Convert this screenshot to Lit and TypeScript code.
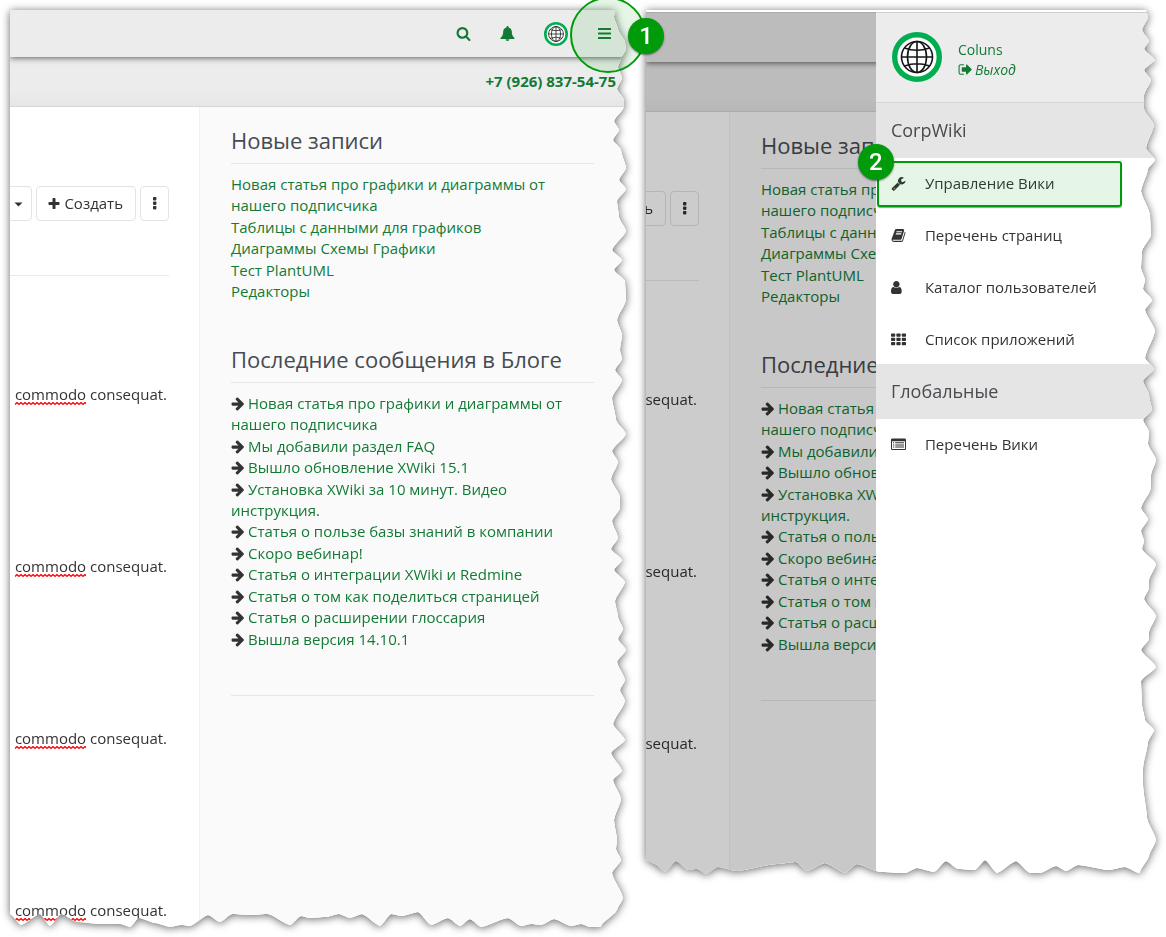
import { LitElement, html, svg, css, type TemplateResult, type SVGTemplateResult } from "lit";
import { customElement, property } from "lit/decorators.js";
import { styleMap } from "lit/directives/style-map.js";

type Point = [number, number];

interface TornFrame {
  x: number;
  y: number;
  width: number;
  height: number;
  right: Point[];
  bottom: Point[];
}

/** Eased samples between neighbouring peaks, so that the paper edge has soft teeth. */
function smooth(points: Point[], along: 0 | 1): Point[] {
  const across = along === 0 ? 1 : 0;
  const out: Point[] = [];
  const steps = 6;
  for (let i = 0; i < points.length - 1; i++) {
    const from = points[i];
    const to = points[i + 1];
    for (let s = 0; s < steps; s++) {
      const t = s / steps;
      const eased = (t + (1 - Math.cos(Math.PI * t)) / 2) / 2;
      const p: Point = [0, 0];
      p[along] = from[along] + (to[along] - from[along]) * t;
      p[across] = from[across] + (to[across] - from[across]) * eased;
      out.push(p);
    }
  }
  out.push(points[points.length - 1]);
  return out;
}

/** Clip polygon: the teeth keep their depth while the edge stretches with the box. */
function tornEdge(f: TornFrame): string {
  const right = smooth(f.right, 1).map(
    ([x, y]) =>
      `calc(100% - ${(f.x + f.width - x).toFixed(2)}px) ${(((y - f.y) / f.height) * 100).toFixed(3)}%`
  );
  const bottom = smooth(f.bottom, 0)
    .reverse()
    .map(
      ([x, y]) =>
        `${(((x - f.x) / f.width) * 100).toFixed(3)}% calc(100% - ${(f.y + f.height - y).toFixed(2)}px)`
    );
  return `polygon(0 0, ${right.join(", ")}, ${bottom.join(", ")})`;
}

const LEFT_EDGE = tornEdge({
  x: 10, y: 10, width: 617, height: 917,
  right: [
    [615, 10], [614, 17], [618, 29], [625, 42], [626, 49], [621, 59], [618, 67], [622, 78], [617, 89],
    [624, 100], [624, 107], [614, 121], [619, 130], [613, 140], [621, 150], [626, 168], [619, 180],
    [626, 189], [617, 201], [619, 217], [626, 231], [612, 250], [622, 260], [614, 270], [625, 281],
    [626, 300], [617, 320], [622, 335], [620, 350], [622, 359], [615, 370], [622, 380], [612, 398],
    [616, 420], [626, 434], [612, 451], [618, 462], [611, 479], [620, 497], [620, 508], [612, 521],
    [618, 538], [611, 549], [622, 560], [614, 570], [625, 582], [615, 601], [618, 617], [623, 629],
    [618, 639], [626, 650], [617, 662], [625, 680], [620, 690], [625, 701], [613, 724], [625, 740],
    [611, 753], [622, 771], [613, 780], [621, 799], [614, 820], [617, 840], [616, 849], [621, 860],
    [612, 873], [623, 898], [617, 910], [601, 926],
  ],
  bottom: [
    [10, 914], [21, 925], [40, 914], [50, 926], [61, 914], [77, 922], [100, 924], [120, 924],
    [130, 927], [139, 918], [155, 923], [170, 927], [181, 925], [190, 926], [208, 915], [220, 922],
    [232, 914], [250, 915], [268, 914], [290, 925], [301, 916], [310, 918], [326, 917], [339, 914],
    [350, 918], [362, 914], [380, 926], [391, 914], [402, 916], [418, 912], [431, 925], [448, 918],
    [460, 926], [470, 919], [481, 927], [508, 918], [521, 926], [531, 924], [541, 925], [554, 919],
    [571, 926], [581, 924], [590, 927], [601, 927],
  ],
});

const RIGHT_EDGE = tornEdge({
  x: 646, y: 10, width: 511, height: 864,
  right: [
    [1146, 10], [1148, 17], [1142, 30], [1149, 41], [1144, 49], [1155, 60], [1144, 70], [1151, 80],
    [1144, 95], [1144, 109], [1154, 125], [1146, 148], [1155, 160], [1148, 169], [1141, 191],
    [1150, 215], [1151, 235], [1142, 251], [1141, 268], [1145, 280], [1143, 289], [1152, 300],
    [1145, 310], [1155, 331], [1145, 358], [1154, 369], [1143, 381], [1149, 395], [1152, 410],
    [1143, 420], [1149, 432], [1148, 444], [1156, 460], [1151, 475], [1151, 488], [1141, 508],
    [1148, 519], [1141, 531], [1144, 541], [1142, 549], [1156, 564], [1149, 580], [1149, 588],
    [1144, 599], [1156, 616], [1149, 632], [1149, 639], [1141, 650], [1156, 667], [1141, 681],
    [1142, 705], [1145, 720], [1154, 730], [1148, 742], [1143, 768], [1143, 785], [1147, 818],
    [1156, 840], [1149, 856], [1140, 872],
  ],
  bottom: [
    [646, 860], [655, 864], [665, 872], [676, 861], [688, 870], [697, 869], [706, 874], [718, 867],
    [736, 871], [777, 864], [796, 862], [807, 871], [825, 863], [845, 873], [857, 864], [880, 872],
    [905, 873], [917, 868], [934, 872], [946, 861], [958, 869], [975, 870], [985, 860], [997, 873],
    [1016, 861], [1030, 873], [1040, 873], [1056, 866], [1066, 871], [1078, 865], [1109, 870],
    [1125, 867], [1139, 873],
  ],
});

const grid3 = [0, 1, 2];

const ICONS: Record<string, { box: string; shape: SVGTemplateResult }> = {
  search: {
    box: "0 0 1792 1792",
    shape: svg`<path d="M1216 832q0-185-131.5-316.5t-316.5-131.5-316.5 131.5-131.5 316.5 131.5 316.5 316.5 131.5 316.5-131.5 131.5-316.5zm512 832q0 52-38 90t-90 38q-54 0-90-38l-343-342q-179 124-399 124-143 0-273.5-55.5t-225-150-150-225-55.5-273.5 55.5-273.5 150-225 225-150 273.5-55.5 273.5 55.5 225 150 150 225 55.5 273.5q0 220-124 399l343 343q37 37 37 90z"/>`,
  },
  bell: {
    box: "0 0 15 15",
    shape: svg`<path d="M7.500 0c.6 0 1 .4 1 1v.4c2.100.4 3.300 2.100 3.300 4.200 0 3.500 1 5 2.700 6.300.2.500-.1 1.100-.7 1.100H1.200c-.6 0-.9-.6-.7-1.100C2.200 10.600 3.200 9.100 3.200 5.600c0-2.100 1.200-3.800 3.300-4.200V1c0-.6.4-1 1-1zM5.700 13.300h3.600c0 1-.8 1.700-1.800 1.700s-1.800-.7-1.800-1.700z"/>`,
  },
  bars: {
    box: "0 0 15 15",
    shape: svg`<rect x="1" y="2" width="13" height="2" rx=".5"/><rect x="1" y="6.500" width="13" height="2" rx=".5"/><rect x="1" y="11" width="13" height="2" rx=".5"/>`,
  },
  signout: {
    box: "0 0 1792 1792",
    shape: svg`<path d="M704 1440q0 4 1 20t.5 26.500-3 23.500-10 19.500-20.500 6.500h-320q-119 0-203.500-84.500t-84.500-203.500v-704q0-119 84.500-203.500t203.500-84.500h320q13 0 22.500 9.500t9.500 22.500q0 4 1 20t.5 26.500-3 23.500-10 19.500-20.500 6.500h-320q-66 0-113 47t-47 113v704q0 66 47 113t113 47h312l11.500 1 11.500 3 8 5.500 7 9 2 13.500zm928-544q0 26-19 45l-544 544q-19 19-45 19t-45-19-19-45v-288h-448q-26 0-45-19t-19-45v-384q0-26 19-45t45-19h448v-288q0-26 19-45t45-19 45 19l544 544q19 19 19 45z"/>`,
  },
  wrench: {
    box: "0 0 1792 1792",
    shape: svg`<path d="M448 1472q0-26-19-45t-45-19-45 19-19 45 19 45 45 19 45-19 19-45zm644-420l-682 682q-37 37-90 37-52 0-91-37l-106-108q-38-36-38-90 0-53 38-91l681-681q39 98 114.500 173.500t173.500 114.500zm634-435q0 39-23 106-47 134-164.500 217.500t-258.500 83.500q-185 0-316.500-131.500t-131.500-316.500 131.500-316.500 316.500-131.500q58 0 121.500 16.500t107.500 46.500q16 11 16 28t-16 28l-293 169v224l193 107q5-3 79-48.500t135.500-81 70.500-35.500q15 0 23.500 10t8.500 25z"/>`,
  },
  book: {
    box: "0 0 1792 1792",
    shape: svg`<path d="M1703 478q40 57 18 129l-275 906q-19 64-76.500 107.500t-122.500 43.500h-923q-77 0-148.500-53.500t-99.500-131.500q-24-67-2-127 0-4 3-27t4-37q1-8-3-21.500t-3-19.500q2-11 8-21t16.500-23.500 16.500-23.500q23-38 45-91.500t30-91.500q3-10 .5-30t-.5-28q3-11 17-28t17-23q21-36 42-92t25-90q1-9-2.500-32t.5-28q4-13 22-30.500t22-22.500q19-26 42.500-84.500t27.500-96.500q1-8-3-25.500t-2-26.500q2-8 9-18t18-23 17-21q8-12 16.500-30.500t15-35 16-36 19.500-32 26.500-23.500 36-11.500 47.500 5.500l-1 3q38-9 51-9h761q74 0 114 56t18 130l-274 906q-36 119-71.500 153.500t-128.500 34.500h-869q-27 0-38 15-11 16-1 43 24 70 144 70h923q29 0 56-15.500t35-41.500l300-987q7-22 5-57 38 15 59 43zm-1064 2q-4 13 2 22.500t20 9.500h608q13 0 25.500-9.500t16.500-22.500l21-64q4-13-2-22.500t-20-9.500h-608q-13 0-25.500 9.500t-16.500 22.500zm-83 256q-4 13 2 22.500t20 9.500h608q13 0 25.500-9.500t16.500-22.500l21-64q4-13-2-22.500t-20-9.500h-608q-13 0-25.500 9.500t-16.500 22.500z"/>`,
  },
  user: {
    box: "256 0 1792 1792",
    shape: svg`<path d="M1536 1399q0 109-62.500 187t-150.500 78h-854q-88 0-150.500-78t-62.500-187q0-85 8.500-160.500t31.500-152 58.500-131 94-89 134.500-34.500q131 128 313 128t313-128q76 0 134.500 34.500t94 89 58.500 131 31.500 152 8.500 160.500zm-256-887q0 159-112.500 271.500t-271.500 112.500-271.500-112.500-112.500-271.500 112.500-271.500 271.500-112.500 271.500 112.500 112.500 271.500z"/>`,
  },
  apps: {
    box: "0 0 15 15",
    shape: svg`${grid3.map((r) =>
      grid3.map((c) => svg`<rect x=${c * 5.4} y=${1.6 + r * 4.2} width="4.200" height="3.200" rx=".7"/>`)
    )}`,
  },
  list: {
    box: "0 0 15 15",
    shape: svg`<path fill-rule="evenodd" d="M1.300 1.500h12.400c.7 0 1.300.6 1.300 1.300v8.900c0 .7-.6 1.300-1.300 1.300H1.300C.6 13 0 12.400 0 11.700V2.800c0-.7.6-1.300 1.300-1.300zM1 4.200v7.500c0 .2.100.3.300.3h12.400c.2 0 .3-.1.300-.3V4.200zM2 5.300h1.200v1H2zm2.200 0H13v1H4.200zM2 7.400h1.200v1H2zm2.200 0H13v1H4.200zM2 9.500h1.200v1H2zm2.200 0H13v1H4.200z"/>`,
  },
  plus: {
    box: "128 128 1536 1536",
    shape: svg`<path d="M1600 736v192q0 40-28 68t-68 28h-416v416q0 40-28 68t-68 28h-192q-40 0-68-28t-28-68v-416h-416q-40 0-68-28t-28-68v-192q0-40 28-68t68-28h416v-416q0-40 28-68t68-28h192q40 0 68 28t28 68v416h416q40 0 68 28t28 68z"/>`,
  },
  dots: {
    box: "0 0 15 15",
    shape: svg`<rect x="6" y="1" width="3.400" height="3.400" rx=".8"/><rect x="6" y="5.500" width="3.400" height="3.400" rx=".8"/><rect x="6" y="10" width="3.400" height="3.400" rx=".8"/>`,
  },
  caret: {
    box: "0 0 15 15",
    shape: svg`<path d="M4.500 6.500h8l-4 4z"/>`,
  },
  arrow: {
    box: "128 0 1664 1792",
    shape: svg`<path d="M1664 960q0 54-37 91l-651 651q-39 37-91 37-51 0-90-37l-75-75q-38-38-38-91t38-91l293-293h-704q-52 0-84.500-37.500t-32.500-90.500v-128q0-53 32.500-90.500t84.500-37.500h704l-293-294q-38-36-38-90t38-90l75-75q38-38 90-38 53 0 91 38l651 651q37 35 37 90z"/>`,
  },
};

function icon(name: string): TemplateResult {
  const { box, shape } = ICONS[name];
  return html`<svg class="icon icon-${name}" viewBox=${box} aria-hidden="true">${shape}</svg>`;
}

function globe(): TemplateResult {
  return html`<svg class="globe" viewBox="0 0 50 50" aria-hidden="true">
    <circle cx="25" cy="25" r="22.300" fill="#fff" stroke="#00ad50" stroke-width="5.400" />
    <g fill="none" stroke="#151515" stroke-width="1.600">
      <circle cx="25" cy="25" r="15.500" />
      <ellipse cx="25" cy="25" rx="9.500" ry="15.500" />
      <path d="M25 9.500v31M9.500 25h31M12.500 16q12.500 4.600 25 0M12.500 34q12.500-4.600 25 0" />
    </g>
  </svg>`;
}

const shared = css`
  *,
  *::before,
  *::after {
    box-sizing: border-box;
  }
  .icon {
    width: 15px;
    height: 15px;
    fill: currentColor;
    flex: none;
  }
  .globe {
    display: block;
    flex: none;
  }
  a {
    color: inherit;
    text-decoration: none;
  }
  button {
    font: inherit;
    color: inherit;
    background: none;
    border: 0;
    padding: 0;
    margin: 0;
  }
  h2,
  p,
  ul {
    margin: 0;
    padding: 0;
    font-weight: 400;
    list-style: none;
  }
`;

const RECENT = [
  "Новая статья про графики и диаграммы от нашего подписчика",
  "Таблицы с данными для графиков",
  "Диаграммы Схемы Графики",
  "Тест PlantUML",
  "Редакторы",
];

const BLOG = [
  "Новая статья про графики и диаграммы от нашего подписчика",
  "Мы добавили раздел FAQ",
  "Вышло обновление XWiki 15.1",
  "Установка XWiki за 10 минут. Видео инструкция.",
  "Статья о пользе базы знаний в компании",
  "Скоро вебинар!",
  "Статья о интеграции XWiki и Redmine",
  "Статья о том как поделиться страницей",
  "Статья о расширении глоссария",
  "Вышла версия 14.10.1",
];

@customElement("wiki-page")
export class WikiPage extends LitElement {
  @property({ type: Boolean, reflect: true }) compact = false;
  @property({ type: Number }) paragraphs = 4;

  static styles = [
    shared,
    css`
      :host {
        display: block;
        overflow: hidden;
        background: #fff;
        --main-width: 189px;
        --bar-height: 47px;
        --tail: 6px;
      }
      :host([compact]) {
        --main-width: 83px;
        --bar-height: 50px;
        --tail: 120px;
      }
      .topbar {
        position: relative;
        display: flex;
        justify-content: flex-end;
        align-items: center;
        gap: 29px;
        height: var(--bar-height);
        padding-right: 15px;
        background: #ececec;
        color: #137a35;
        box-shadow: 0 1px 6px rgba(0, 0, 0, 0.6);
      }
      :host([compact]) .topbar {
        border-top: 1px solid #d6d6d6;
      }
      .topbar button {
        display: flex;
      }
      .topbar .globe {
        width: 24px;
        height: 24px;
      }
      .subbar {
        display: flex;
        justify-content: flex-end;
        align-items: center;
        height: 50px;
        padding-right: 11px;
        border-bottom: 1px solid #d6d6d6;
        background: linear-gradient(#ececec 70%, #e6e6e6);
        color: #137a35;
        font-weight: 700;
      }
      .body {
        display: flex;
      }
      .main {
        flex: 0 0 var(--main-width);
        display: flex;
        flex-direction: column;
        align-items: flex-end;
        overflow: hidden;
        padding: 79px 30px var(--tail) 0;
      }
      .tools {
        display: flex;
        gap: 4px;
        padding-bottom: 54px;
      }
      .tools button {
        display: flex;
        align-items: center;
        justify-content: center;
        gap: 4px;
        height: 35px;
        min-width: 29px;
        border: 1px solid #e3e3e3;
        border-radius: 4px;
        background: #fff;
        white-space: nowrap;
      }
      .tools .wide {
        padding: 0 12px 0 11px;
      }
      .tools .icon-plus {
        width: 12px;
        height: 12px;
      }
      .rule {
        width: 400px;
        height: 1px;
        border: 0;
        margin: 0 0 108px;
        flex: none;
        background: #e9e9e9;
      }
      .text {
        padding-right: 2px;
        white-space: nowrap;
      }
      .text + .text {
        margin-top: 151px;
      }
      .typo {
        padding-bottom: 1px;
        background: url("data:image/svg+xml,%3Csvg xmlns='http://www.w3.org/2000/svg' width='4' height='3'%3E%3Cpath d='M0 2.500L2 .5L4 2.500' fill='none' stroke='%23f00' stroke-width='1.300'/%3E%3C/svg%3E")
          repeat-x left bottom;
      }
      .aside {
        flex: 1;
        min-width: 0;
        padding: 21px 33px 0 31px;
        border-left: 1px solid #f1f1f1;
        background: #fafafa;
        color: #137a35;
      }
      .title {
        padding-bottom: 11px;
        border-bottom: 1px solid #e6e6e6;
        color: #454b52;
        font-size: 22px;
        line-height: 24px;
      }
      .links {
        padding-top: 10px;
        margin-bottom: 45px;
      }
      .links li:nth-child(even) {
        padding-top: 1px;
      }
      .links .icon {
        width: 14px;
        color: #333;
        margin-right: 3px;
        vertical-align: -2px;
      }
      .end {
        height: 1px;
        border: 0;
        margin: 0;
        background: #e6e6e6;
      }
      :host([compact]) .tools button {
        background: none;
      }
    `,
  ];

  render() {
    return html`
      <header class="topbar">
        ${this.compact
          ? ""
          : html`<button type="button">${icon("search")}</button>
              <button type="button">${icon("bell")}</button>
              <a href="#">${globe()}</a>
              <button type="button">${icon("bars")}</button>`}
      </header>
      <div class="subbar">${this.compact ? "" : html`<a href="tel:+79268375475">+7 (926) 837-54-75</a>`}</div>
      <div class="body">
        <main class="main">
          <div class="tools">
            <button type="button">${icon("caret")}</button>
            <button type="button" class="wide">${icon("plus")}<span>Создать</span></button>
            <button type="button">${icon("dots")}</button>
          </div>
          <hr class="rule" />
          ${Array.from(
            { length: this.paragraphs },
            () => html`<p class="text"><span class="typo">commodo</span> consequat.</p>`
          )}
        </main>
        <aside class="aside">
          <h2 class="title">Новые записи</h2>
          <ul class="links">
            ${RECENT.map((t) => html`<li><a href="#">${t}</a></li>`)}
          </ul>
          <h2 class="title">Последние сообщения в Блоге</h2>
          <ul class="links">
            ${BLOG.map((t) => html`<li>${icon("arrow")}<a href="#">${t}</a></li>`)}
          </ul>
          <hr class="end" />
        </aside>
      </div>
    `;
  }
}

@customElement("wiki-drawer")
export class WikiDrawer extends LitElement {
  static styles = [
    shared,
    css`
      :host {
        display: block;
        background: #fff;
        color: #333;
      }
      .profile {
        display: flex;
        align-items: center;
        gap: 16px;
        height: 91px;
        padding: 0 16px 2px;
        border-top: 1px solid #cfcfcf;
        border-bottom: 1px solid #d6d6d6;
        background: #ececec;
        color: #137a35;
        font-size: 14px;
        line-height: 20px;
      }
      .profile .globe {
        width: 50px;
        height: 50px;
      }
      .who {
        display: flex;
        flex-direction: column;
        padding-top: 6px;
      }
      .exit {
        display: flex;
        align-items: center;
        gap: 2px;
        font-style: italic;
      }
      .section {
        padding: 15px 15px 16px;
        background: #e5e5e5;
        color: #4a4a4f;
        font-size: 18px;
        line-height: 24px;
      }
      .menu {
        display: flex;
        flex-direction: column;
        gap: 2px;
      }
      .item {
        display: flex;
        align-items: center;
        gap: 19px;
        height: 50px;
        padding: 0 15px;
      }
    `,
  ];

  private item(glyph: string, label: string) {
    return html`<li><a class="item" href="#">${icon(glyph)}<span>${label}</span></a></li>`;
  }

  render() {
    return html`
      <div class="profile">
        ${globe()}
        <div class="who">
          <a href="#">Coluns</a>
          <a class="exit" href="#">${icon("signout")}<span>Выход</span></a>
        </div>
      </div>
      <h2 class="section">CorpWiki</h2>
      <ul class="menu">
        ${this.item("wrench", "Управление Вики")} ${this.item("book", "Перечень страниц")}
        ${this.item("user", "Каталог пользователей")} ${this.item("apps", "Список приложений")}
      </ul>
      <h2 class="section">Глобальные</h2>
      <ul class="menu">
        ${this.item("list", "Перечень Вики")}
      </ul>
    `;
  }
}

@customElement("app-root")
export class AppRoot extends LitElement {
  static styles = [
    shared,
    css`
      :host {
        display: block;
        overflow: hidden;
        background: #fff;
        color: #333;
        font-family: "Open Sans", "Noto Sans", sans-serif;
        font-size: 15px;
        line-height: 21px;
      }
      .board {
        display: flex;
        align-items: flex-start;
        gap: 19px;
        padding: 10px 9px 10px 10px;
      }
      .shot {
        position: relative;
        min-width: 0;
      }
      .shot.first {
        flex: 617 1 0;
        z-index: 1;
      }
      .shot.second {
        flex: 511 1 0;
      }
      .shadow {
        filter: drop-shadow(0 1px 4px rgba(0, 0, 0, 0.6));
      }
      .paper {
        position: relative;
        background: #fff;
      }
      .second .paper {
        padding-top: 2px;
      }
      .veil {
        position: absolute;
        inset: 2px 0 0;
        background: rgba(0, 0, 0, 0.2);
      }
      .drawer {
        position: absolute;
        inset: 2px 0 0 45%;
      }
      .ring {
        position: absolute;
        top: -13px;
        right: -19px;
        width: 76px;
        height: 76px;
        border: 2px solid #009b0a;
        border-radius: 50%;
        background: rgba(0, 155, 10, 0.1);
      }
      .mark {
        position: absolute;
        top: 151px;
        left: 45%;
        right: 35px;
        height: 46px;
        margin-left: 1px;
        border: 2px solid #009b0a;
        border-radius: 3px;
        background: rgba(0, 155, 10, 0.1);
        box-shadow: 0 1px 1px rgba(0, 0, 0, 0.4);
      }
      .badge {
        position: absolute;
        display: flex;
        align-items: center;
        justify-content: center;
        width: 36px;
        height: 36px;
        border-radius: 50%;
        background: #009b0a;
        box-shadow: 0 1px 2px rgba(0, 0, 0, 0.5);
        color: #fff;
        font: 500 24px/36px Roboto, Arial, sans-serif;
      }
      .first .badge {
        top: 8px;
        right: -37px;
      }
      .second .badge {
        top: 134px;
        left: 45%;
        margin-left: -18px;
      }
    `,
  ];

  render() {
    return html`
      <div class="board">
        <section class="shot first">
          <div class="shadow">
            <div class="paper" style=${styleMap({ clipPath: LEFT_EDGE })}>
              <wiki-page .paragraphs=${4}></wiki-page>
            </div>
          </div>
          <div class="ring"></div>
          <div class="badge">1</div>
        </section>
        <section class="shot second">
          <div class="shadow">
            <div class="paper" style=${styleMap({ clipPath: RIGHT_EDGE })}>
              <wiki-page compact .paragraphs=${3}></wiki-page>
              <div class="veil"></div>
              <wiki-drawer class="drawer"></wiki-drawer>
            </div>
          </div>
          <div class="mark"></div>
          <div class="badge">2</div>
        </section>
      </div>
    `;
  }
}
